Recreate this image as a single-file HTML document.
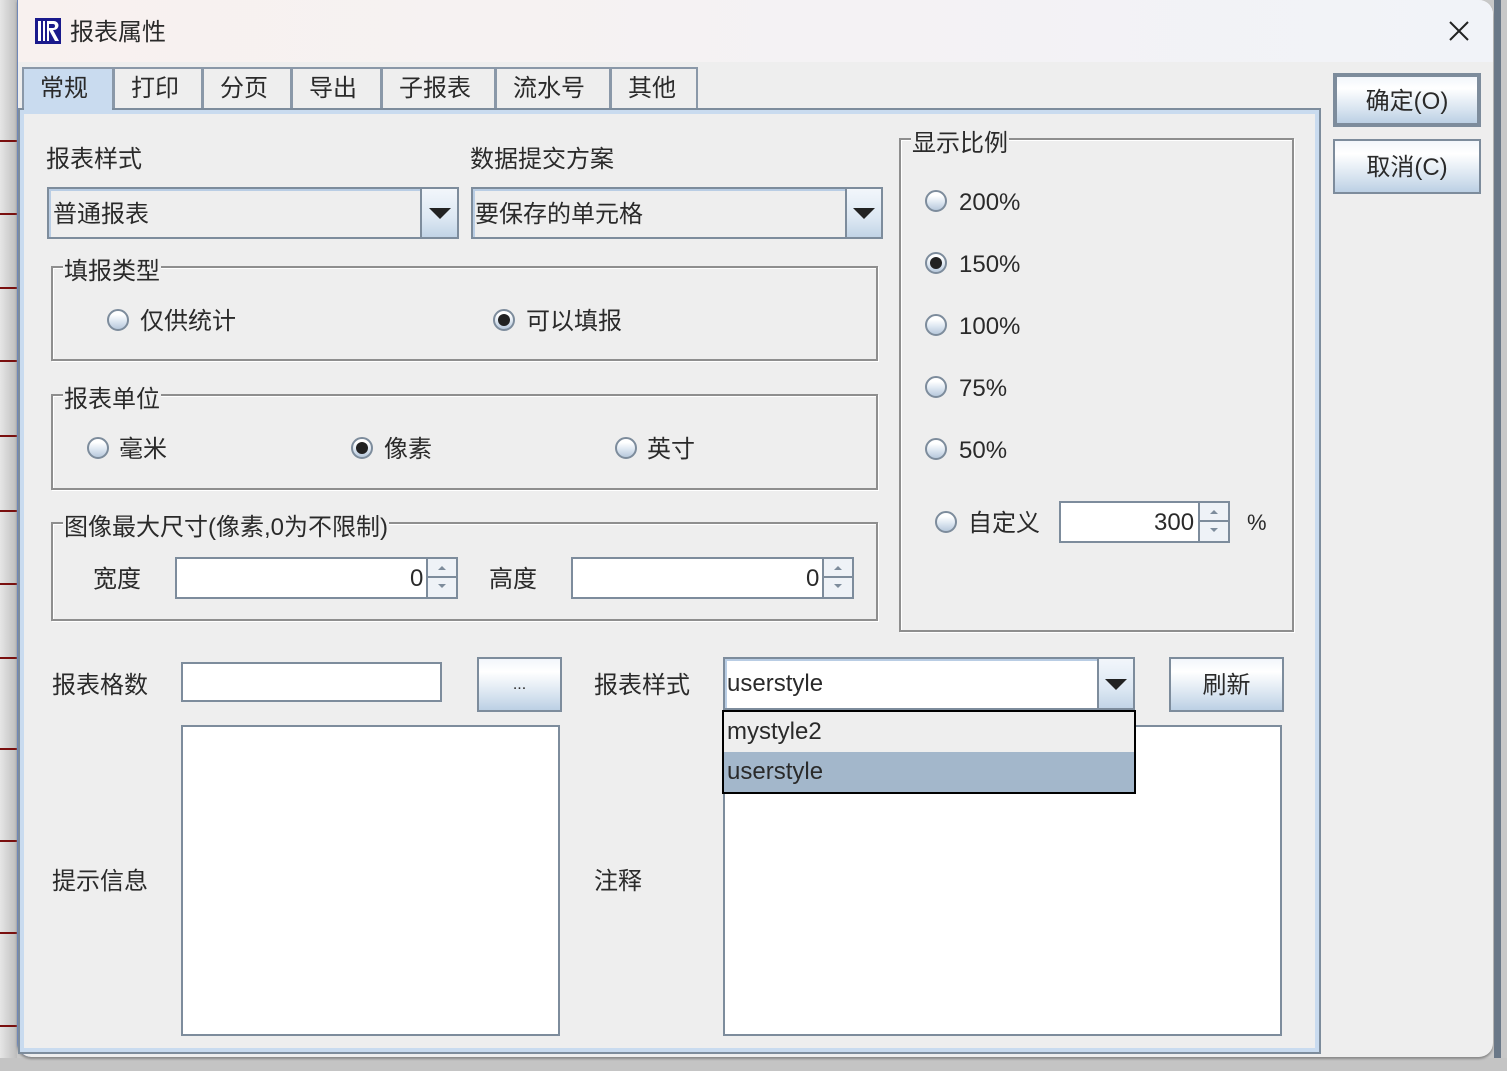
<!DOCTYPE html>
<html><head><meta charset="utf-8">
<style>
*{box-sizing:border-box;margin:0;padding:0}
body{width:1507px;height:1071px;overflow:hidden;background:#c8c8c8;position:relative;font-family:"Liberation Sans","Noto Sans CJK SC","WenQuanYi Zen Hei",sans-serif;color:#222;font-size:24px}
.a{position:absolute}
.t{position:absolute;white-space:nowrap;line-height:30px;font-size:24px;color:#2a2a2a;margin-top:2px}
.grp{position:absolute;border:2px solid #8e8e8e;box-shadow:inset 1px 1px 0 #fff,1px 1px 0 #fff}
.gt{position:absolute;background:#eeeeee;padding:0 1px;line-height:28px;font-size:24px;top:-10px;left:10px;color:#2a2a2a;white-space:nowrap}
.radio{position:absolute;width:22px;height:22px;border-radius:50%;border:2px solid #7d8c9c;background:linear-gradient(#fff 20%,#dfe8f2 55%,#b8c9dc)}
.radio.on::after{content:"";position:absolute;left:3px;top:3px;width:12px;height:12px;border-radius:50%;background:#222}
.fld{position:absolute;background:#fff;border:2px solid #7d8c9c;box-shadow:inset 2px 2px 0 #b9cde4}
.btn{position:absolute;border:2px solid #7d8c9c;background:linear-gradient(#f2f6fb,#fff 25%,#d8e4f0 70%,#bcd0e4);text-align:center;font-size:24px;color:#2a2a2a;padding-top:3px}
.arrow{position:absolute;border:2px solid #7d8c9c;background:linear-gradient(#f2f6fb,#dde8f3 60%,#c2d4e6)}
.arrow::after{content:"";position:absolute;left:50%;top:50%;margin-left:-11px;margin-top:-5px;border-left:11px solid transparent;border-right:11px solid transparent;border-top:11px solid #222}
.spin{position:absolute;border:2px solid #7d8c9c;background:#eef2f7}
.spin i{position:absolute;left:0;right:0;height:50%;}
.spin i.u{top:0;border-bottom:2px solid #7d8c9c}
.spin i.u::after{content:"";position:absolute;left:50%;top:40%;margin-left:-4px;border-left:4px solid transparent;border-right:4px solid transparent;border-bottom:4px solid #7d8c9c}
.spin i.d{bottom:0}
.spin i.d::after{content:"";position:absolute;left:50%;top:30%;margin-left:-4px;border-left:4px solid transparent;border-right:4px solid transparent;border-top:4px solid #7d8c9c}
.tab{position:absolute;top:67px;height:42px;border:2px solid #8a98a8;border-bottom:none;background:#eeeeee;font-size:24px;line-height:40px;padding-left:16px;color:#2a2a2a}
.tab.sel{background:#c9dbef;height:43px}
.rl{position:absolute;left:0;width:17px;height:2px;background:#7a1010}
</style></head><body>
<div class="a" style="left:0;top:0;width:17px;height:1071px;background:linear-gradient(90deg,#e6e6e6,#bdbdbd)"></div>
<div class="rl" style="top:140px"></div><div class="rl" style="top:213px"></div><div class="rl" style="top:287px"></div><div class="rl" style="top:360px"></div><div class="rl" style="top:435px"></div><div class="rl" style="top:510px"></div><div class="rl" style="top:583px"></div><div class="rl" style="top:657px"></div><div class="rl" style="top:748px"></div><div class="rl" style="top:840px"></div><div class="rl" style="top:932px"></div><div class="rl" style="top:1025px"></div>
<div class="a" style="left:1494px;top:0;width:7px;height:1071px;background:#6a7888"></div>
<div class="a" style="left:0;top:1058px;width:1507px;height:13px;background:#c4c4c4"></div>

<div class="a" style="left:17px;top:0;width:1476px;height:1057px;background:#eeeeee;border-radius:0 14px 14px 14px;border-left:1px solid #7088b8;box-shadow:0 2px 2px #888"></div>
<div class="a" style="left:18px;top:0;width:1475px;height:62px;background:linear-gradient(90deg,#f8f1ef,#f1f3f8);border-radius:0 14px 0 0"></div>
<svg class="a" style="left:35px;top:18px" width="26" height="26" viewBox="0 0 26 26"><rect width="26" height="26" fill="#1a1a8c"/><rect x="3" y="3" width="3" height="20" fill="#fff"/><rect x="8" y="3" width="2" height="20" fill="#fff"/><path d="M12 3h7a4 4 0 0 1 0 9h-1l6 11h-4l-6-11v11h-2z M14 6v4h4a2 2 0 0 0 0-4z" fill="#fff" fill-rule="evenodd"/></svg>
<div class="t" style="left:70px;top:16px">报表属性</div>
<svg class="a" style="left:1448px;top:20px" width="22" height="22" viewBox="0 0 22 22"><path d="M2 2L20 20M20 2L2 20" stroke="#222" stroke-width="2"/></svg>

<div class="tab sel" style="left:22px;width:92px">常规</div>
<div class="tab" style="left:113px;width:90px">打印</div>
<div class="tab" style="left:202px;width:90px">分页</div>
<div class="tab" style="left:291px;width:91px">导出</div>
<div class="tab" style="left:381px;width:115px">子报表</div>
<div class="tab" style="left:495px;width:116px">流水号</div>
<div class="tab" style="left:610px;width:88px">其他</div>

<div class="a" style="left:18px;top:108px;width:1303px;height:946px;border:2px solid #7d8c9c;box-shadow:inset 0 0 0 4px #c9dbef;background:#eeeeee"></div>
<div class="a" style="left:24px;top:108px;width:88px;height:6px;background:#c9dbef"></div>

<div class="t" style="left:46px;top:143px">报表样式</div>
<div class="t" style="left:470px;top:143px">数据提交方案</div>
<div class="fld" style="left:47px;top:187px;width:412px;height:52px;background:#eeeeee"></div>
<div class="t" style="left:53px;top:198px">普通报表</div>
<div class="arrow" style="left:420px;top:187px;width:39px;height:52px"></div>
<div class="fld" style="left:471px;top:187px;width:412px;height:52px;background:#eeeeee"></div>
<div class="t" style="left:475px;top:198px">要保存的单元格</div>
<div class="arrow" style="left:845px;top:187px;width:38px;height:52px"></div>

<div class="grp" style="left:51px;top:266px;width:827px;height:95px"><div class="gt">填报类型</div></div>
<div class="radio" style="left:107px;top:309px"></div><div class="t" style="left:140px;top:305px">仅供统计</div>
<div class="radio on" style="left:493px;top:309px"></div><div class="t" style="left:526px;top:305px">可以填报</div>

<div class="grp" style="left:51px;top:394px;width:827px;height:96px"><div class="gt">报表单位</div></div>
<div class="radio" style="left:87px;top:437px"></div><div class="t" style="left:119px;top:433px">毫米</div>
<div class="radio on" style="left:351px;top:437px"></div><div class="t" style="left:384px;top:433px">像素</div>
<div class="radio" style="left:615px;top:437px"></div><div class="t" style="left:647px;top:433px">英寸</div>

<div class="grp" style="left:51px;top:522px;width:827px;height:99px"><div class="gt">图像最大尺寸(像素,0为不限制)</div></div>
<div class="t" style="left:93px;top:563px">宽度</div>
<div class="fld" style="left:175px;top:557px;width:253px;height:42px;box-shadow:none"></div>
<div class="t" style="left:410px;top:562px">0</div>
<div class="spin" style="left:426px;top:557px;width:32px;height:42px"><i class="u"></i><i class="d"></i></div>
<div class="t" style="left:489px;top:563px">高度</div>
<div class="fld" style="left:571px;top:557px;width:253px;height:42px;box-shadow:none"></div>
<div class="t" style="left:806px;top:562px">0</div>
<div class="spin" style="left:822px;top:557px;width:32px;height:42px"><i class="u"></i><i class="d"></i></div>

<div class="grp" style="left:899px;top:138px;width:395px;height:494px"><div class="gt">显示比例</div></div>
<div class="radio" style="left:925px;top:190px"></div><div class="t" style="left:959px;top:186px">200%</div>
<div class="radio on" style="left:925px;top:252px"></div><div class="t" style="left:959px;top:248px">150%</div>
<div class="radio" style="left:925px;top:314px"></div><div class="t" style="left:959px;top:310px">100%</div>
<div class="radio" style="left:925px;top:376px"></div><div class="t" style="left:959px;top:372px">75%</div>
<div class="radio" style="left:925px;top:438px"></div><div class="t" style="left:959px;top:434px">50%</div>
<div class="radio" style="left:935px;top:511px"></div><div class="t" style="left:968px;top:507px">自定义</div>
<div class="fld" style="left:1059px;top:501px;width:142px;height:42px;box-shadow:none"></div>
<div class="t" style="left:1154px;top:506px">300</div>
<div class="spin" style="left:1198px;top:501px;width:32px;height:42px"><i class="u"></i><i class="d"></i></div>
<div class="t" style="left:1247px;top:506px;font-size:22px">%</div>

<div class="btn" style="left:1333px;top:73px;width:148px;height:54px;border:4px solid #7d8c9c;line-height:44px">确定(O)</div>
<div class="btn" style="left:1333px;top:139px;width:148px;height:55px;line-height:48px">取消(C)</div>

<div class="t" style="left:52px;top:669px">报表格数</div>
<div class="fld" style="left:181px;top:662px;width:261px;height:40px;box-shadow:none"></div>
<div class="btn" style="left:477px;top:657px;width:85px;height:55px;line-height:46px;font-size:16px">...</div>
<div class="t" style="left:594px;top:669px">报表样式</div>
<div class="fld" style="left:723px;top:657px;width:412px;height:53px"></div>
<div class="t" style="left:727px;top:667px">userstyle</div>
<div class="arrow" style="left:1097px;top:657px;width:38px;height:53px"></div>
<div class="btn" style="left:1169px;top:657px;width:115px;height:55px;line-height:48px">刷新</div>

<div class="fld" style="left:181px;top:725px;width:379px;height:311px;box-shadow:none"></div>
<div class="t" style="left:52px;top:865px">提示信息</div>
<div class="t" style="left:594px;top:865px">注释</div>
<div class="fld" style="left:723px;top:725px;width:559px;height:311px;box-shadow:none"></div>

<div class="a" style="left:722px;top:710px;width:414px;height:84px;border:2px solid #000;background:#eeeeee">
  <div class="a" style="left:0;top:40px;width:410px;height:40px;background:#a3b7cb"></div>
  <div class="t" style="left:3px;top:3px">mystyle2</div>
  <div class="t" style="left:3px;top:43px">userstyle</div>
</div>
</body></html>
